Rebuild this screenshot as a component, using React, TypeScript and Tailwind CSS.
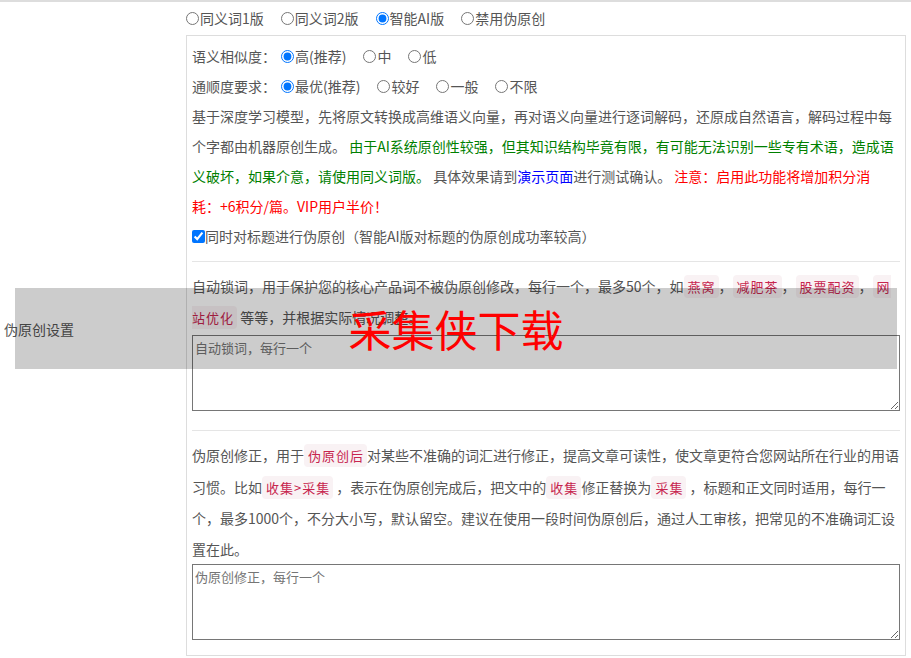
import React from 'react';

const font = { fontFamily: '"Noto Sans CJK SC", "Liberation Sans", sans-serif' };

function Code({ children }: { children: React.ReactNode }) {
  return (
    <code
      className="rounded-[4px] bg-[#f9f2f4] py-[2px] pr-[3px] pl-[4px] text-[13px] tracking-[1px] text-[#c7254e]"
      style={font}
    >
      {children}
    </code>
  );
}

function Radio({ name, label, checked }: { name: string; label: string; checked?: boolean }) {
  return (
    <label className="mr-[12px] inline-flex items-center">
      <input type="radio" name={name} defaultChecked={checked} className="m-0 mr-[1px] ml-[5px] h-[13px] w-[13px]" />
      <span>{label}</span>
    </label>
  );
}

export default function App() {
  return (
    <div className="relative min-h-[658px] w-[911px] border-t-2 border-[#ddd] bg-white text-[14px] text-[#555]" style={font}>
      <div className="flex">
        <div className="flex w-[186px] shrink-0 items-center pl-[4px]">伪原创设置</div>
        <div className="flex-1 pr-[5px]">
          <div className="-ml-[5px] flex h-[33px] items-center">
            <Radio name="ver" label="同义词1版" />
            <Radio name="ver" label="同义词2版" />
            <Radio name="ver" label="智能AI版" checked />
            <Radio name="ver" label="禁用伪原创" />
          </div>
          <div className="border border-[#ddd] px-[5px] pt-[5px] pb-[15px]">
            <div className="flex h-[30px] items-center">
              <span>语义相似度：</span>
              <Radio name="sim" label="高(推荐)" checked />
              <Radio name="sim" label="中" />
              <Radio name="sim" label="低" />
            </div>
            <div className="flex h-[30px] items-center">
              <span>通顺度要求：</span>
              <Radio name="flu" label="最优(推荐)" checked />
              <Radio name="flu" label="较好" />
              <Radio name="flu" label="一般" />
              <Radio name="flu" label="不限" />
            </div>
            <p className="leading-[30px]">
              基于深度学习模型，先将原文转换成高维语义向量，再对语义向量进行逐词解码，还原成自然语言，解码过程中每个字都由机器原创生成。{' '}
              <span className="text-[#008000]">由于AI系统原创性较强，但其知识结构毕竟有限，有可能无法识别一些专有术语，造成语义破坏，如果介意，请使用同义词版。</span>{' '}
              具体效果请到<span className="text-[#0000ff]">演示页面</span>进行测试确认。{' '}
              <span className="text-[#ff0000]">
                注意：启用此功能将增加积分消
                <br />
                耗：+6积分/篇。VIP用户半价！
              </span>
            </p>
            <label className="flex h-[30px] items-center">
              <input type="checkbox" defaultChecked className="m-0 h-[13px] w-[13px]" />
              <span>同时对标题进行伪原创（智能AI版对标题的伪原创成功率较高）</span>
            </label>
            <hr className="mt-[10px] border-t border-[#e5e5e5]" />
            <p className="mt-[9px] leading-[30px]">
              自动锁词，用于保护您的核心产品词不被伪原创修改，每行一个，最多50个，如<Code>燕窝</Code>，<Code>减肥茶</Code>，<Code>股票配资</Code>，<Code>网站优化</Code> 等等，并根据实际情况调整。
            </p>
            <textarea
              placeholder="自动锁词，每行一个"
              className="mt-[2px] block h-[76px] w-full border border-[#767676] p-[2px] text-[13px] placeholder:text-[#757575]"
              style={font}
            />
            <hr className="mt-[19px] border-t border-[#e5e5e5]" />
            <p className="mt-[9px] leading-[30.5px]">
              伪原创修正，用于<Code>伪原创后</Code>对某些不准确的词汇进行修正，提高文章可读性，使文章更符合您网站所在行业的用语习惯。比如<Code>收集&gt;采集</Code> ，表示在伪原创完成后，把文中的<Code>收集</Code>修正替换为<Code>采集</Code> ，标题和正文同时适用，每行一个，最多1000个，不分大小写，默认留空。建议在使用一段时间伪原创后，通过人工审核，把常见的不准确词汇设置在此。
            </p>
            <textarea
              placeholder="伪原创修正，每行一个"
              className="block h-[76px] w-full border border-[#767676] p-[2px] text-[13px] placeholder:text-[#757575]"
              style={font}
            />
          </div>
        </div>
      </div>
      <div className="absolute top-[286px] left-[15px] flex h-[81px] w-[882px] items-center justify-center bg-black/20">
        <span className="text-[43px] leading-none text-[#ff0000]" style={font}>采集侠下载</span>
      </div>
    </div>
  );
}
